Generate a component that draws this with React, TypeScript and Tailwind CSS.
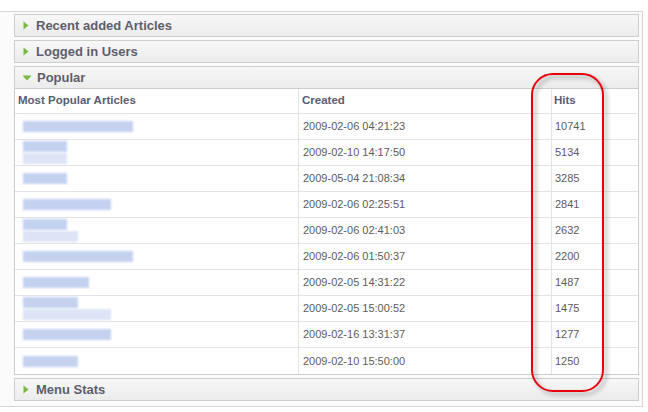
import React from 'react';

interface Row {
    created: string;
    hits: number;
    blur: number[]; // widths of the smudged title blocks
}

const ROWS: Row[] = [
    { created: '2009-02-06 04:21:23', hits: 10741, blur: [110] },
    { created: '2009-02-10 14:17:50', hits: 5134, blur: [44, 44] },
    { created: '2009-05-04 21:08:34', hits: 3285, blur: [44] },
    { created: '2009-02-06 02:25:51', hits: 2841, blur: [88] },
    { created: '2009-02-06 02:41:03', hits: 2632, blur: [44, 55] },
    { created: '2009-02-06 01:50:37', hits: 2200, blur: [110] },
    { created: '2009-02-05 14:31:22', hits: 1487, blur: [66] },
    { created: '2009-02-05 15:00:52', hits: 1475, blur: [55, 88] },
    { created: '2009-02-16 13:31:37', hits: 1277, blur: [88] },
    { created: '2009-02-10 15:50:00', hits: 1250, blur: [55] },
];

function Arrow({ open }: { open?: boolean }) {
    return open ? (
        <svg width="10" height="6" viewBox="0 0 10 6" className="shrink-0">
            <path d="M0.5 0.5 H9.5 L5 5.5 Z" fill="#78b843" />
        </svg>
    ) : (
        <svg width="6" height="9" viewBox="0 0 6 9" className="shrink-0 ml-[1px] mr-[2px]">
            <path d="M0.5 0.5 L5.5 4.5 L0.5 8.5 Z" fill="#78b843" />
        </svg>
    );
}

function PanelHeader({ title, open }: { title: string; open?: boolean }) {
    return (
        <div className="flex items-center gap-[5px] h-[21px] pl-[7px] bg-gradient-to-b from-[#f7f7f7] to-[#ececec]">
            <Arrow open={open} />
            <span className="text-[13px] font-bold text-[#5e5e6c] leading-none">{title}</span>
        </div>
    );
}

function Panel({ title }: { title: string }) {
    return (
        <div className="border border-[#cdcdcd]">
            <PanelHeader title={title} />
        </div>
    );
}

export default function App() {
    return (
        <div className="w-[648px] h-[412px] bg-white pt-[11px] font-['Liberation_Sans',Arial,sans-serif]">
            <div className="relative w-[643px] h-[396px] border-t border-r border-b border-[#d6d6d6] bg-[#fbfbfb] pl-[14px] pr-[3px] pt-[2px] flex flex-col gap-[3px]">
                <Panel title="Recent added Articles" />
                <Panel title="Logged in Users" />

                <div className="border border-[#cdcdcd]">
                    <div className="border-b border-[#cdcdcd]">
                        <PanelHeader title="Popular" open />
                    </div>
                    <div className="bg-white">
                        <div className="grid grid-cols-[284px_253px_1fr] h-[25px] border-b border-[#e4e4e4] text-[11.5px] font-bold text-[#5a5c70]">
                            <div className="flex items-center pl-[3px] border-r border-[#e4e4e4]">Most Popular Articles</div>
                            <div className="flex items-center pl-[3px] border-r border-[#e4e4e4]">Created</div>
                            <div className="flex items-center pl-[2px]">Hits</div>
                        </div>
                        {ROWS.map((row, i) => (
                            <div
                                key={i}
                                className="grid grid-cols-[284px_253px_1fr] h-[26px] border-b border-[#e4e4e4] last:border-b-0 text-[11px] text-[#5c5c5c]"
                            >
                                <div className="relative flex flex-col justify-center gap-[1px] pl-[8px] border-r border-[#e4e4e4]">
                                    {row.blur.map((w, j) => (
                                        <div
                                            key={j}
                                            className={`h-[11px] blur-[1px] ${j === 0 ? 'bg-[#c4d2f0]' : 'bg-[#dce4f6]'}`}
                                            style={{ width: w }}
                                        />
                                    ))}
                                </div>
                                <div className="flex items-center pl-[4px] border-r border-[#e4e4e4]">{row.created}</div>
                                <div className="flex items-center pl-[3px]">{row.hits}</div>
                            </div>
                        ))}
                    </div>
                </div>

                <Panel title="Menu Stats" />

                {/* red highlight drawn over the Hits column */}
                <div className="absolute left-[531px] top-[61px] w-[73px] h-[319px] rounded-[22px] border-[2.5px] border-[#e8000b] drop-shadow-[3px_3px_2px_rgba(0,0,0,0.35)] pointer-events-none" />
            </div>
        </div>
    );
}
